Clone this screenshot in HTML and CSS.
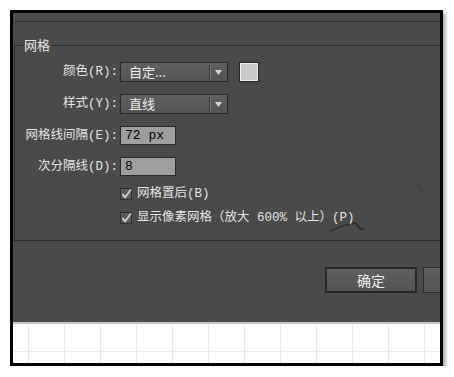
FILE: index.html
```html
<!DOCTYPE html>
<html lang="zh-CN">
<head>
<meta charset="utf-8">
<title>网格</title>
<link rel="stylesheet" href="styles.css">
</head>
<body>
<div class="frame">
  <div class="top"></div>
  <fieldset class="group">
    <legend class="legend">网格</legend>
    <div class="rows">
      <div class="label"><span>颜色(R):</span></div>
      <div class="ctrl">
        <div class="select">
          <span class="select-text">自定...</span>
          <span class="divider"></span>
          <svg class="arrow" width="7" height="5" viewBox="0 0 7 5"><path d="M0 0H7L3.5 5Z" fill="#d6d6d6"/></svg>
        </div>
        <div class="swatch"></div>
      </div>

      <div class="label"><span>样式(Y):</span></div>
      <div class="ctrl">
        <div class="select">
          <span class="select-text">直线</span>
          <span class="divider"></span>
          <svg class="arrow" width="7" height="5" viewBox="0 0 7 5"><path d="M0 0H7L3.5 5Z" fill="#d6d6d6"/></svg>
        </div>
      </div>

      <div class="label"><span>网格线间隔(E):</span></div>
      <div class="ctrl"><div class="input">72 px</div></div>

      <div class="label"><span>次分隔线(D):</span></div>
      <div class="ctrl"><div class="input">8</div></div>

      <div class="label"></div>
      <div class="ctrl check-row">
        <span class="checkbox"><svg width="12" height="12" viewBox="0 0 12 12"><path d="M2.5 6.2L5 9.2L11 1.5" fill="none" stroke="#cfcfcf" stroke-width="1.8"/></svg></span>
        <span class="check-text">网格置后(B)</span>
      </div>

      <div class="label"></div>
      <div class="ctrl check-row">
        <span class="checkbox"><svg width="12" height="12" viewBox="0 0 12 12"><path d="M2.5 6.2L5 9.2L11 1.5" fill="none" stroke="#cfcfcf" stroke-width="1.8"/></svg></span>
        <span class="check-text">显示像素网格（放大 600% 以上）(P)</span>
      </div>
    </div>
    <svg class="marks" width="110" height="60" viewBox="0 0 110 60">
      <path d="M2 52L14 47L22 45" stroke="#2e2e2e" stroke-width="1.5" fill="none"/>
      <path d="M24 45Q28 43 30 47Q32 51 36 50" stroke="#2e2e2e" stroke-width="2" fill="none"/>
      <path d="M90 6L92 9M94 11L95 12" stroke="#2e2e2e" stroke-width="1" fill="none"/>
    </svg>
  </fieldset>
  <div class="footer">
    <button class="btn btn-primary">确定</button>
    <button class="btn btn-second" aria-label="取消"></button>
  </div>
  <div class="canvas"></div>
</div>
</body>
</html>
```

FILE: styles.css
```css
html, body {
  margin: 0;
  padding: 0;
  background: #ffffff;
}

body {
  font-family: "Liberation Mono", "Noto Sans CJK SC", monospace;
  font-size: 12.5px;
  color: #e4e4e4;
}

.frame {
  margin: 10px 0 0 10px;
  width: 433px;
  height: 356px;
  box-sizing: border-box;
  border: 3px solid #000;
  background: #4a4a4a;
  overflow: hidden;
  display: flex;
  flex-direction: column;
  box-shadow: 3px 3px 3px rgba(0, 0, 0, 0.3);
}

.top {
  flex: none;
  height: 8px;
  margin-left: 1px;
  border-left: 1px solid #5c5c5c;
  border-bottom: 1px solid #2c2c2c;
}

.group {
  flex: none;
  position: relative;
  margin: 15px 0 0 1px;
  width: 450px;
  min-width: 450px;
  box-sizing: border-box;
  padding: 9px 0 16px 0;
  border: 1px solid #2d2d2d;
}

.legend {
  margin-left: 8px;
  padding: 0 1px;
  line-height: 16px;
  height: 16px;
  font-family: "Noto Sans CJK SC", sans-serif;
  font-size: 13px;
  color: #e4e4e4;
}

.rows {
  display: grid;
  grid-template-columns: 103px auto;
  grid-template-rows: 20px 20px 19px 19px 12px 12px;
  column-gap: 2px;
  row-gap: 12px;
}

.label {
  display: flex;
  align-items: center;
  justify-content: flex-end;
  white-space: nowrap;
  line-height: 16px;
}

.ctrl {
  display: flex;
  align-items: center;
  gap: 11px;
}

.select {
  width: 108px;
  height: 20px;
  box-sizing: border-box;
  border: 1px solid #2a2a2a;
  background: linear-gradient(#606060, #545454);
  display: flex;
  align-items: center;
}

.select-text {
  flex: 1;
  padding-left: 8px;
  line-height: 16px;
  font-family: "Noto Sans CJK SC", sans-serif;
  font-size: 13px;
  color: #ececec;
}

.divider {
  width: 0;
  height: 15px;
  border-left: 1px solid #3a3a3a;
  border-right: 1px solid #777;
  margin-right: 4px;
}

.arrow {
  display: block;
  margin-right: 5px;
}

.swatch {
  width: 20px;
  height: 20px;
  box-sizing: border-box;
  border: 1px solid #222;
  box-shadow: inset 0 0 0 1px #f2f2f2;
  background: #c9c9c9;
  margin-top: -1px;
}

.input {
  width: 56px;
  height: 19px;
  box-sizing: border-box;
  border: 1px solid #2a2a2a;
  background: #9e9e9e;
  color: #000;
  padding-left: 4px;
  line-height: 17px;
  font-size: 13px;
  white-space: nowrap;
}

.check-row {
  gap: 5px;
}

.checkbox {
  width: 12px;
  height: 12px;
  box-sizing: border-box;
  border: 1px solid #2e2e2e;
  background: #5a5a5a;
  display: flex;
  align-items: center;
  justify-content: center;
  overflow: visible;
}

.checkbox svg {
  display: block;
  flex: none;
}

.check-text {
  white-space: nowrap;
  line-height: 16px;
}

.marks {
  position: absolute;
  left: 313px;
  top: 126px;
  overflow: visible;
}

.footer {
  flex: none;
  height: 81px;
  box-sizing: border-box;
  padding: 26px 0 0 312px;
  display: flex;
  align-items: flex-start;
  gap: 6px;
}

.btn {
  flex: none;
  width: 92px;
  height: 26px;
  box-sizing: border-box;
  margin: 0;
  padding: 0;
  font-family: "Noto Sans CJK SC", sans-serif;
  font-size: 14px;
  color: #ececec;
  background: linear-gradient(#5e5e5e, #545454);
}

.btn-primary {
  border: 2px solid #272727;
}

.btn-second {
  border: 1px solid #2e2e2e;
}

.canvas {
  flex: 1;
  border-top: 2px solid #c4c4c4;
  background-color: #ffffff;
  background-image:
    linear-gradient(to right, #e8e8e8 1px, transparent 1px),
    linear-gradient(to bottom, #ececec 1px, transparent 1px);
  background-size: 36px 36px, 36px 36px;
  background-position: 15px 0, 0 27px;
}
```
